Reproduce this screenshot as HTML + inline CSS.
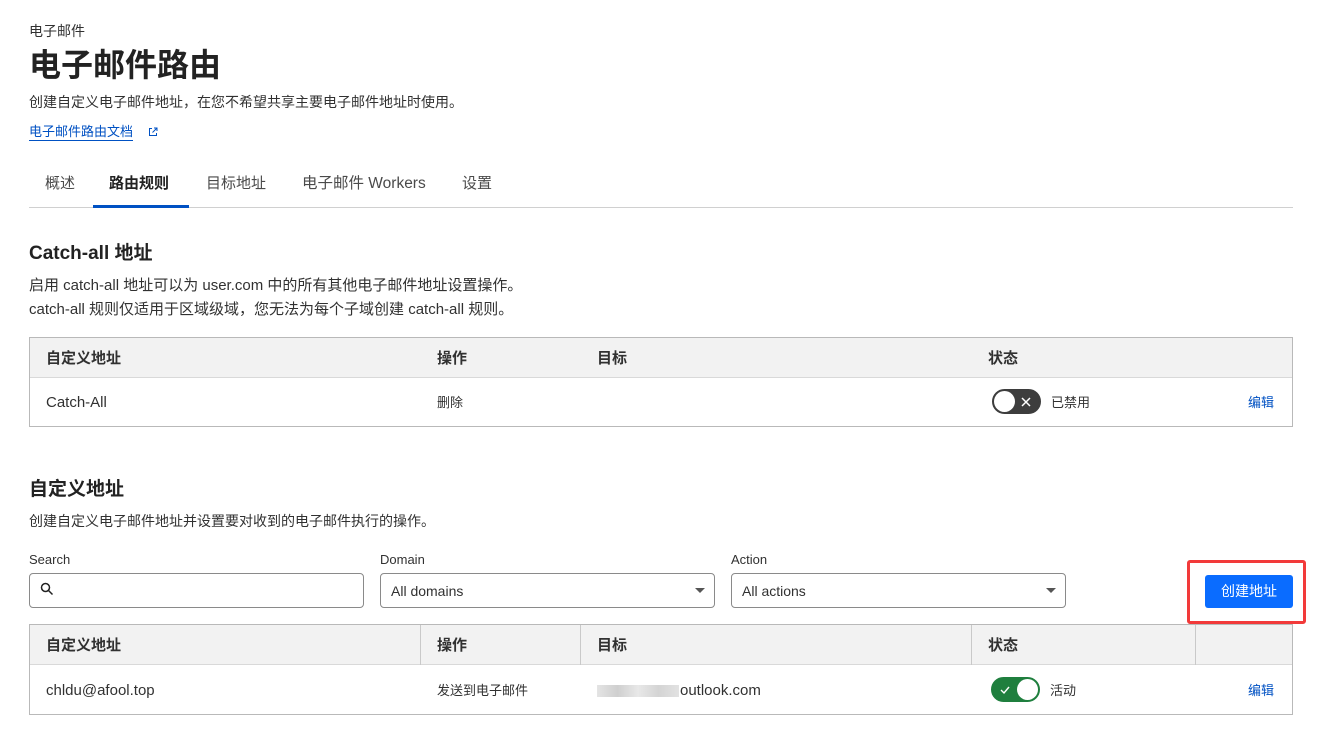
<!DOCTYPE html>
<html><head><meta charset="utf-8"><style>
*{margin:0;padding:0;box-sizing:border-box}
body{width:1336px;height:737px;background:#fff;font-family:"Liberation Sans","Noto Sans CJK SC",sans-serif;color:#313131;position:relative;overflow:hidden}
.a{position:absolute;white-space:nowrap;line-height:1}
.tbl{position:absolute;left:29px;width:1264px;border:1px solid #b9b9b9}
.hd{position:absolute;left:0;right:0;top:0;height:40px;background:#f2f2f2;border-bottom:1px solid #d9d9d9}
.th{font-size:15px;font-weight:bold;color:#313131}
.inp{position:absolute;top:573px;height:35px;width:335px;border:1px solid #8a8a8a;border-radius:4px;font-size:14px}
.lbl{font-size:13px;color:#313131;top:553px}
.car{position:absolute;right:9px;top:14px;width:0;height:0;border-left:5px solid transparent;border-right:5px solid transparent;border-top:5px solid #555}
.edit{color:#0051c3;font-size:13px}
.vd{position:absolute;top:0;height:40px;width:1px;background:#c9c9c9}
</style></head><body>
<div class="a" style="left:29px;top:24px;font-size:14px;">电子邮件</div>
<div class="a" style="left:29px;top:49px;font-size:32px;font-weight:bold;color:#222">电子邮件路由</div>
<div class="a" style="left:29px;top:95px;font-size:14px;">创建自定义电子邮件地址，在您不希望共享主要电子邮件地址时使用。</div>
<div class="a" style="left:29px;top:125px;font-size:13px;color:#0051c3;border-bottom:1px solid #0051c3;padding-bottom:2px">电子邮件路由文档</div>
<svg class="a" style="left:147px;top:126px" width="12" height="12" viewBox="0 0 12 12" fill="none" stroke="#0051c3" stroke-width="1"><path d="M5 2.5H2.5v7h7V7M7 2h3v3M10 2L5.5 6.5"/></svg>
<div class="a" style="left:45px;top:176px;font-size:15px;color:#4a4a4a">概述</div>
<div class="a" style="left:109px;top:176px;font-size:15px;font-weight:bold;color:#222">路由规则</div>
<div class="a" style="left:206px;top:176px;font-size:15px;color:#4a4a4a">目标地址</div>
<div class="a" style="left:302px;top:176px;font-size:15.5px;color:#4a4a4a">电子邮件 Workers</div>
<div class="a" style="left:462px;top:176px;font-size:15px;color:#4a4a4a">设置</div>
<div class="a" style="left:29px;top:207px;width:1264px;height:1px;background:#d0d0d0"></div>
<div class="a" style="left:93px;top:205px;width:96px;height:3px;background:#0051c3"></div>

<div class="a" style="left:29px;top:244px;font-size:19px;font-weight:bold;color:#222">Catch-all 地址</div>
<div class="a" style="left:29px;top:278px;font-size:15px;">启用 catch-all 地址可以为 user.com 中的所有其他电子邮件地址设置操作。</div>
<div class="a" style="left:29px;top:302px;font-size:15px;">catch-all 规则仅适用于区域级域，您无法为每个子域创建 catch-all 规则。</div>

<div class="tbl" style="top:337px;height:90px">
 <div class="hd"></div>
 <div class="a th" style="left:16px;top:13px">自定义地址</div>
 <div class="a th" style="left:407px;top:13px">操作</div>
 <div class="a th" style="left:567px;top:13px">目标</div>
 <div class="a th" style="left:958px;top:13px">状态</div>
 <div class="a" style="left:16px;top:57px;font-size:15px">Catch-All</div>
 <div class="a" style="left:407px;top:58px;font-size:13px">删除</div>
 <div class="a" style="left:962px;top:51px;width:49px;height:25px;border-radius:13px;background:#3d3d3d;border:2px solid #3d3d3d"><div style="position:absolute;left:0;top:0;width:21px;height:21px;border-radius:50%;background:#fff"></div><svg style="position:absolute;left:27px;top:6px" width="10" height="10" viewBox="0 0 10 10" stroke="#fff" stroke-width="1.5"><path d="M1 1L9 9M9 1L1 9"/></svg></div>
 <div class="a" style="left:1021px;top:58px;font-size:13px">已禁用</div>
 <div class="a edit" style="left:1218px;top:58px">编辑</div>
</div>

<div class="a" style="left:29px;top:480px;font-size:19px;font-weight:bold;color:#222">自定义地址</div>
<div class="a" style="left:29px;top:514px;font-size:14px;">创建自定义电子邮件地址并设置要对收到的电子邮件执行的操作。</div>

<div class="a lbl" style="left:29px">Search</div>
<div class="a lbl" style="left:380px">Domain</div>
<div class="a lbl" style="left:731px">Action</div>
<div class="inp" style="left:29px"><svg style="position:absolute;left:10px;top:8px" width="14" height="14" viewBox="0 0 14 14" fill="none" stroke="#222" stroke-width="1.5"><circle cx="5.5" cy="5.5" r="4"/><path d="M8.5 8.5L12.5 12.5"/></svg></div>
<div class="inp" style="left:380px"><div class="a" style="left:10px;top:10px">All domains</div><div class="car"></div></div>
<div class="inp" style="left:731px"><div class="a" style="left:10px;top:10px">All actions</div><div class="car"></div></div>
<div class="a" style="left:1187px;top:560px;width:119px;height:64px;border:3px solid #f23a3a;border-radius:3px"></div>
<div class="a" style="left:1205px;top:575px;width:88px;height:33px;background:#0a6cff;border-radius:3px;color:#fff;font-size:14px;text-align:center;line-height:33px">创建地址</div>

<div class="tbl" style="top:624px;height:91px">
 <div class="hd"></div>
 <div class="vd" style="left:390px"></div><div class="vd" style="left:550px"></div><div class="vd" style="left:941px"></div><div class="vd" style="left:1165px"></div>
 <div class="a th" style="left:16px;top:13px">自定义地址</div>
 <div class="a th" style="left:407px;top:13px">操作</div>
 <div class="a th" style="left:567px;top:13px">目标</div>
 <div class="a th" style="left:958px;top:13px">状态</div>
 <div class="a" style="left:16px;top:58px;font-size:15px">chldu@afool.top</div>
 <div class="a" style="left:407px;top:59px;font-size:13px">发送到电子邮件</div>
 <div class="a" style="left:567px;top:60px;width:82px;height:12px;background:linear-gradient(90deg,#e4e4e4,#cfcfcf,#e8e8e8,#d4d4d4,#e2e2e2)"></div>
 <div class="a" style="left:650px;top:58px;font-size:15px">outlook.com</div>
 <div class="a" style="left:961px;top:52px;width:49px;height:25px;border-radius:13px;background:#1f7f3e;border:2px solid #1f7f3e"><div style="position:absolute;right:0;top:0;width:21px;height:21px;border-radius:50%;background:#fff"></div><svg style="position:absolute;left:7px;top:6px" width="10" height="10" viewBox="0 0 10 10" fill="none" stroke="#fff" stroke-width="1.4"><path d="M1 5L4 8L9 2"/></svg></div>
 <div class="a" style="left:1020px;top:59px;font-size:13px">活动</div>
 <div class="a edit" style="left:1218px;top:59px">编辑</div>
</div>
</body></html>
